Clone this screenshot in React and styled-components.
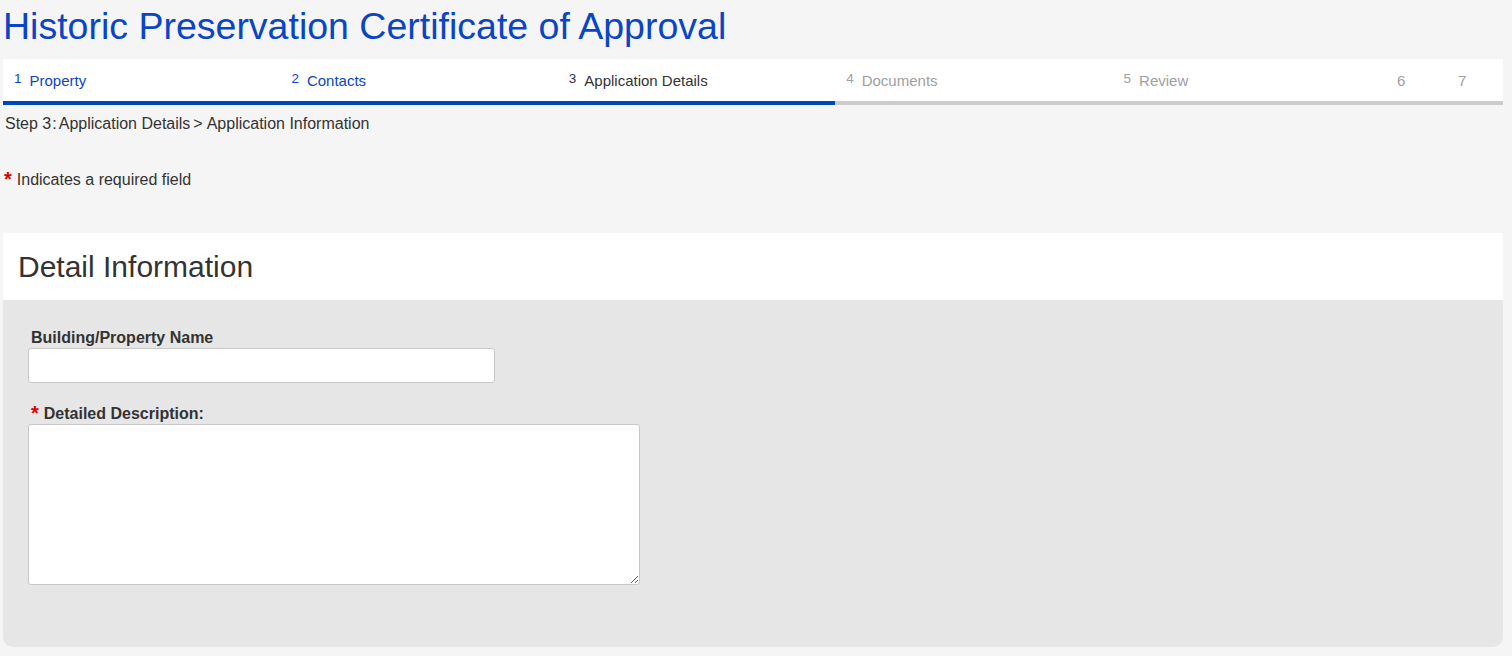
import React from 'react'
import styled, { createGlobalStyle } from 'styled-components'

const GlobalStyle = createGlobalStyle`
  html, body {
    margin: 0;
    padding: 0;
    background-color: #f5f5f5;
    font-family: "Liberation Sans", Arial, sans-serif;
    color: #333;
  }
`

const Page = styled.div`
  padding: 0 9px 0 3px;
  min-height: 656px;
  box-sizing: border-box;
`

const Title = styled.h1`
  margin: 0;
  padding: 4px 0 0 0;
  height: 59px;
  box-sizing: border-box;
  font-size: 37.5px;
  font-weight: normal;
  color: #0b45c4;
  line-height: 44px;
`

const Stepper = styled.ol`
  list-style: none;
  margin: 0;
  padding: 0;
  display: flex;
  background-color: #fff;
  overflow: hidden;
`

const Step = styled.li`
  flex: ${(p) => (p.narrow ? '0 0 61px' : '0 0 277.4px')};
  height: 46px;
  box-sizing: border-box;
  padding: 0 0 0 ${(p) => (p.narrow ? '7px' : '11px')};
  display: flex;
  align-items: center;
  font-size: 15px;
  border-bottom: 4px solid ${(p) => (p.done ? '#0047bb' : '#cccccc')};
  color: ${(p) => (p.state === 'link' ? '#0b45c4' : p.state === 'current' ? '#333' : '#a0a0a0')};
`

const StepNumber = styled.span`
  font-size: 13.5px;
  position: relative;
  top: -2px;
  margin-right: 8px;
`

const Breadcrumb = styled.div`
  padding: 10px 0 0 2px;
  font-size: 16px;
  line-height: 18px;
  color: #333;
`

const Sep = styled.span`
  margin: ${(p) => (p.wide ? '0 4px 0 3px' : '0 2px 0 1px')};
`

const Required = styled.div`
  margin-top: 38px;
  padding-left: 1px;
  font-size: 16px;
  line-height: 18px;
  display: flex;
  align-items: flex-start;
`

const Asterisk = styled.span`
  color: #e00000;
  font-size: 20px;
  line-height: 16px;
  margin-right: 5px;
  font-weight: bold;
`

const Card = styled.section`
  margin-top: 44px;
  border-radius: 0 0 10px 10px;
  overflow: hidden;
`

const CardHeader = styled.div`
  background-color: #fff;
  height: 67px;
  display: flex;
  align-items: center;
  padding-left: 15px;
`

const CardTitle = styled.h2`
  margin: 0;
  font-size: 30px;
  font-weight: normal;
  color: #333;
`

const CardBody = styled.div`
  background-color: #e6e6e6;
  height: 347px;
  padding: 29px 25px 0;
  box-sizing: border-box;
  display: flex;
  flex-direction: column;
  gap: 22px;
`

const Field = styled.div`
  display: flex;
  flex-direction: column;
`

const Label = styled.label`
  font-size: 16px;
  font-weight: bold;
  color: #333;
  padding-left: 3px;
  height: 19px;
  display: flex;
  align-items: flex-start;
`

const TextInput = styled.input`
  width: 467px;
  height: 35px;
  box-sizing: border-box;
  border: 1px solid #c8c8c8;
  border-radius: 3px;
  background: #fff;
  font-family: inherit;
  font-size: 15px;
  margin: 0;
`

const TextArea = styled.textarea`
  width: 612px;
  height: 161px;
  box-sizing: border-box;
  border: 1px solid #c8c8c8;
  border-radius: 3px;
  background: #fff;
  font-family: inherit;
  font-size: 15px;
  margin: 0;
`

const steps = [
  { n: 1, label: 'Property', state: 'link', done: true },
  { n: 2, label: 'Contacts', state: 'link', done: true },
  { n: 3, label: 'Application Details', state: 'current', done: true },
  { n: 4, label: 'Documents', state: 'todo' },
  { n: 5, label: 'Review', state: 'todo' },
  { n: 6, label: '', state: 'todo', narrow: true },
  { n: 7, label: '', state: 'todo', narrow: true },
]

export default function App() {
  return (
    <>
      <GlobalStyle />
      <Page>
        <Title>Historic Preservation Certificate of Approval</Title>
        <Stepper>
          {steps.map((s) => (
            <Step key={s.n} state={s.state} done={s.done} narrow={s.narrow}>
              {s.label ? (
                <>
                  <StepNumber>{s.n}</StepNumber>
                  {s.label}
                </>
              ) : (
                s.n
              )}
            </Step>
          ))}
        </Stepper>
        <Breadcrumb>
          Step 3<Sep>:</Sep>Application Details<Sep wide>&gt;</Sep>Application Information
        </Breadcrumb>
        <Required>
          <Asterisk>*</Asterisk>
          Indicates a required field
        </Required>
        <Card>
          <CardHeader>
            <CardTitle>Detail Information</CardTitle>
          </CardHeader>
          <CardBody>
            <Field>
              <Label htmlFor="bname">Building/Property Name</Label>
              <TextInput id="bname" type="text" />
            </Field>
            <Field>
              <Label htmlFor="desc">
                <Asterisk>*</Asterisk>
                Detailed Description:
              </Label>
              <TextArea id="desc" />
            </Field>
          </CardBody>
        </Card>
      </Page>
    </>
  )
}
